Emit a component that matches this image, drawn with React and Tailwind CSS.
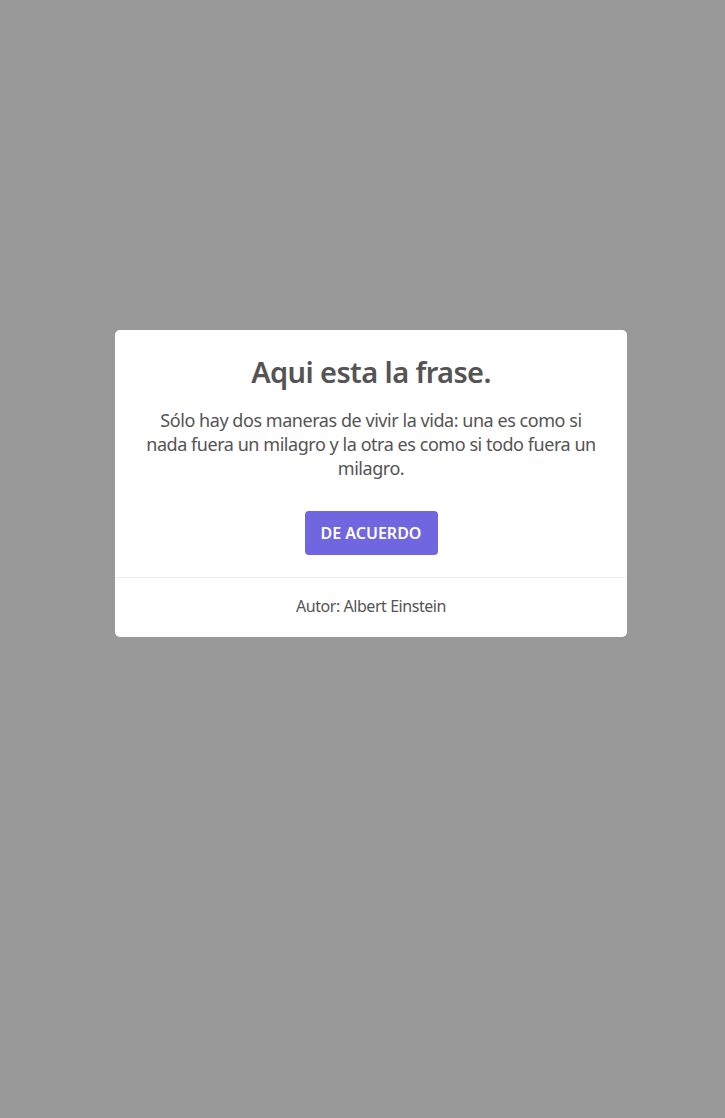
export default function App() {
  return (
    <div className="min-h-[1118px] w-full bg-[#999999] flex items-center justify-center" style={{ fontFamily: '"Noto Sans", "Open Sans", sans-serif' }}>
      <div className="w-[512px] bg-white rounded-[5px] flex flex-col items-center pb-[19px] mt-[-151px] ml-[17px]">
        <h2 className="mt-[24px] text-[29px] leading-[36px] font-semibold tracking-[-0.6px] text-[#545454] text-center">Aqui esta la frase.</h2>
        <p className="mt-[18px] px-[26px] text-[18px] leading-[24px] tracking-[-0.45px] text-[#545454] text-center">
          Sólo hay dos maneras de vivir la vida: una es como si nada fuera un milagro y la otra es como si todo fuera un milagro.
        </p>
        <button className="mt-[31px] h-[44px] w-[133px] rounded-[4px] bg-[#7066e0] text-white text-[16px] font-semibold">DE ACUERDO</button>
        <div className="mt-[22px] w-full border-t border-[#eeeeee] pt-[16px] text-center text-[16px] leading-[24px] tracking-[-0.45px] text-[#545454]">
          Autor: Albert Einstein
        </div>
      </div>
    </div>
  );
}
